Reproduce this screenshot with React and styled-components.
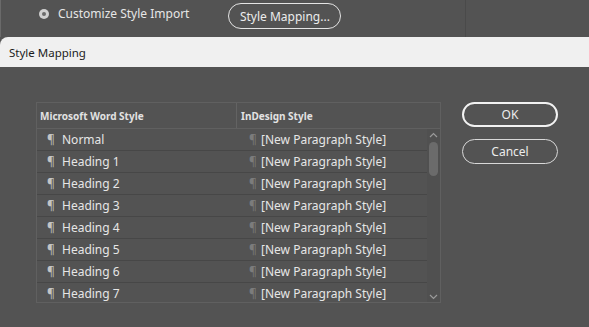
import React from "react";
import styled, { createGlobalStyle } from "styled-components";

const Global = createGlobalStyle`
  html, body { margin: 0; padding: 0; background: #535353; }
  body { font-family: "Noto Sans", "Open Sans", sans-serif; }
  * { box-sizing: border-box; }
`;

const Page = styled.div`
  width: 589px;
  height: 327px;
  background: #535353;
  overflow: hidden;
  display: flex;
  flex-direction: column;
`;

const TopBar = styled.div`
  height: 37px;
  display: flex;
  align-items: center;
  padding-left: 38px;
  position: relative;
  border-left: 1px solid #6a6a6a;
`;

const Divider = styled.div`
  position: absolute;
  left: 464px;
  top: 0;
  bottom: 0;
  width: 1px;
  background: #4a4a4a;
`;

const Radio = styled.span`
  width: 10px;
  height: 10px;
  border-radius: 50%;
  background: #cfcfcf;
  display: flex;
  align-items: center;
  justify-content: center;
  margin-top: -9px;
  &::after {
    content: "";
    width: 4px;
    height: 4px;
    border-radius: 50%;
    background: #6a6a6a;
  }
`;

const RadioLabel = styled.span`
  margin-left: 9px;
  margin-top: -10px;
  font-size: 12px;
  color: #e6e6e6;
`;

const PillButton = styled.div`
  margin-left: 39px;
  margin-top: -5px;
  width: 113px;
  height: 26px;
  border: 1.5px solid #e4e4e4;
  border-radius: 13px;
  display: flex;
  align-items: center;
  justify-content: center;
  font-size: 12px;
  color: #ececec;
`;

const TitleBar = styled.div`
  height: 30px;
  background: #f0f0f0;
  border-top-left-radius: 8px;
  display: flex;
  align-items: center;
  padding-left: 9px;
  font-size: 11.5px;
  color: #1c1c1c;
`;

const Body = styled.div`
  flex: 1;
  display: flex;
  align-items: flex-start;
  padding: 35px 0 0 36px;
  gap: 21px;
`;

const Table = styled.div`
  width: 405px;
  height: 201px;
  border: 1px solid #606060;
  display: flex;
  flex-direction: column;
  overflow: hidden;
`;

const HeaderRow = styled.div`
  height: 26px;
  display: grid;
  grid-template-columns: 199px 1fr;
  border-bottom: 1px solid #606060;
  flex-shrink: 0;
`;

const HeaderCell = styled.div`
  display: flex;
  align-items: center;
  padding-left: ${(p) => p.$pad}px;
  font-size: 10px;
  font-weight: 700;
  color: #e2e2e2;
  border-left: ${(p) => (p.$divided ? "1px solid #636363" : "none")};
`;

const BodyArea = styled.div`
  flex: 1;
  display: flex;
  overflow: hidden;
`;

const Rows = styled.div`
  flex: 1;
  display: flex;
  flex-direction: column;
`;

const Row = styled.div`
  height: 22px;
  flex-shrink: 0;
  display: grid;
  grid-template-columns: 199px 1fr;
  border-bottom: 1px solid #474747;
  font-size: 12px;
  color: #e6e6e6;
`;

const Cell = styled.div`
  display: flex;
  align-items: center;
  padding-left: ${(p) => p.$pad}px;
  white-space: nowrap;
`;

const Pilcrow = styled.span`
  color: ${(p) => (p.$dim ? "#7c7c7c" : "#c4c4c4")};
  font-size: 12px;
  width: ${(p) => p.$w}px;
  flex-shrink: 0;
`;

const ScrollTrack = styled.div`
  width: 13px;
  background: #505050;
  position: relative;
`;

const Thumb = styled.div`
  position: absolute;
  top: 13px;
  left: 2px;
  width: 9px;
  height: 34px;
  border-radius: 5px;
  background: #6b6b6b;
`;

const Arrow = styled.svg`
  position: absolute;
  left: 2px;
`;

const Buttons = styled.div`
  display: flex;
  flex-direction: column;
  gap: 12px;
`;

const DialogButton = styled.div`
  width: 96px;
  height: 25px;
  border-radius: 12.5px;
  border: ${(p) => (p.$primary ? "2px solid #f2f2f2" : "1px solid #d8d8d8")};
  display: flex;
  align-items: center;
  justify-content: center;
  font-size: 12px;
  color: #ececec;
`;

const rows = ["Normal", "Heading 1", "Heading 2", "Heading 3", "Heading 4", "Heading 5", "Heading 6", "Heading 7"];

export default function App() {
  return (
    <Page>
      <Global />
      <TopBar>
        <Radio />
        <RadioLabel>Customize Style Import</RadioLabel>
        <PillButton>Style Mapping...</PillButton>
        <Divider />
      </TopBar>
      <TitleBar>Style Mapping</TitleBar>
      <Body>
        <Table>
          <HeaderRow>
            <HeaderCell $pad={3}>Microsoft Word Style</HeaderCell>
            <HeaderCell $pad={4} $divided>InDesign Style</HeaderCell>
          </HeaderRow>
          <BodyArea>
            <Rows>
              {rows.map((r) => (
                <Row key={r}>
                  <Cell $pad={10}>
                    <Pilcrow $w={15}>¶</Pilcrow>
                    {r}
                  </Cell>
                  <Cell $pad={13}>
                    <Pilcrow $dim $w={12}>¶</Pilcrow>
                    [New Paragraph Style]
                  </Cell>
                </Row>
              ))}
            </Rows>
            <ScrollTrack>
              <Arrow width="9" height="6" viewBox="0 0 9 6" style={{ top: 3 }}>
                <path d="M1 5 L4.5 1.5 L8 5" fill="none" stroke="#9a9a9a" strokeWidth="1.2" />
              </Arrow>
              <Thumb />
              <Arrow width="9" height="6" viewBox="0 0 9 6" style={{ top: 165 }}>
                <path d="M1 1 L4.5 4.5 L8 1" fill="none" stroke="#9a9a9a" strokeWidth="1.2" />
              </Arrow>
            </ScrollTrack>
          </BodyArea>
        </Table>
        <Buttons>
          <DialogButton $primary>OK</DialogButton>
          <DialogButton>Cancel</DialogButton>
        </Buttons>
      </Body>
    </Page>
  );
}
